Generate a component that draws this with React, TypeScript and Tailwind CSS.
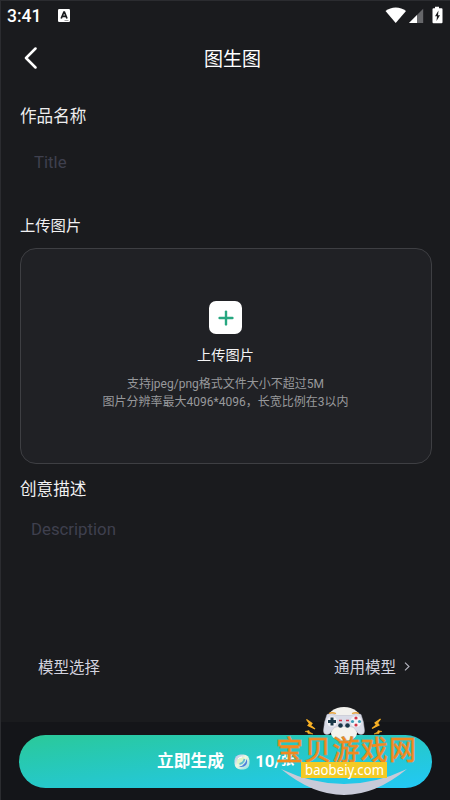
import { useState } from "react";
import { Plus } from "lucide-react";

const UPLOAD_HINTS = [
  "支持jpeg/png格式文件大小不超过5M",
  "图片分辨率最大4096*4096，长宽比例在3以内",
];

function StatusBar() {
  return (
    <div className="flex h-[31px] items-center justify-between pl-[6px] pr-[7px]">
      <div className="flex items-center gap-[17px]">
        <span className="-mt-px text-[17.5px] font-medium leading-[30px]">3:41</span>
        <svg className="-mt-0.5 h-[13px] w-3" viewBox="0 0 12 13">
          <rect width="12" height="13" rx="1.2" fill="#fff" />
          <path d="M3.2 9.5 5.9 3h.5l2.6 6.5M4.4 7.3h3.5" fill="none" stroke="#1a1b1e" strokeWidth="1.7" />
          <path d="M6.5 11.5h4" stroke="#8a8b8e" strokeWidth="0.8" />
        </svg>
      </div>
      <svg className="-mt-1 h-[18px] w-[58px]" viewBox="0 0 58 18">
        <path d="M.5 5C6 .2 15.500.2 21 5L10.700 17Z" fill="#fff" />
        <path d="M24 17 38.200 2.800V17Z" fill="#66676a" />
        <path d="M24 17 32 9V17Z" fill="#fff" />
        <path d="M50 .8h4v1.500h2.500q1 0 1 1v13q0 1-1 1h-8q-1 0-1-1v-13q0-1 1-1H50Z" fill="#fff" />
        <path d="M53.500 4.500 50 10.300h2L51.500 15 55 9.300h-2Z" fill="#1a1b1e" />
      </svg>
    </div>
  );
}

function Header() {
  return (
    <div className="grid h-[54px] grid-cols-[60px_1fr_46px] items-center">
      <button className="-mt-0.5 pl-[22px]">
        <svg className="h-[22px] w-[14px]" viewBox="0 0 14 22">
          <path d="M12.500 1.500 3 11 12.500 20.500" fill="none" stroke="#fff" strokeWidth="2.500" strokeLinecap="round" strokeLinejoin="round" />
        </svg>
      </button>
      <h1 className="pt-0.5 text-center text-[19px] leading-[28px]">图生图</h1>
    </div>
  );
}

function UploadCard() {
  return (
    <button className="flex h-[216px] w-[412px] flex-col items-center rounded-[16px] border border-[#3e3f43] bg-[#202125] pr-px pt-[52px]">
      <span className="flex h-[33px] w-[33px] items-center justify-center rounded-[7px] bg-white text-[#27a780]">
        <Plus className="h-[22px] w-[22px]" strokeWidth={2.6} />
      </span>
      <span className="mt-[11px] text-[14.2px] leading-[20px] text-[#f4f4f5]">上传图片</span>
      <span className="mt-[11px] flex flex-col items-center text-[12px] leading-[17.500px] text-[#98999c]">
        {UPLOAD_HINTS.map((hint) => (
          <span key={hint}>{hint}</span>
        ))}
      </span>
    </button>
  );
}

function Coin() {
  return (
    <svg className="h-4 w-4" viewBox="0 0 16 16">
      <defs>
        <linearGradient id="coin" x1="0" y1="0" x2="1" y2="1">
          <stop offset="0" stopColor="#a9b8ee" />
          <stop offset="0.45" stopColor="#eef9e2" />
          <stop offset="1" stopColor="#8fdce6" />
        </linearGradient>
      </defs>
      <rect x="0.500" y="0.500" width="15" height="15" rx="6" fill="url(#coin)" />
      <path d="M12.500 5Q14 8 12 11q-3 3-7 1.500 4-.5 5.500-3Q12 8 12.500 5Z" fill="#4f7fdc" />
      <path d="M3 7.500q0-4 5-4.500 3 0 3 2.500-2 4-6 5Q3 10 3 7.500Z" fill="#dff5c8" />
      <path d="M5.500 10q4-.5 5-5" fill="none" stroke="#63bfd0" strokeWidth="1.800" />
      <path d="M4 5q1.500-2 4-2" fill="none" stroke="#fff" strokeWidth="1" />
    </svg>
  );
}

// Site stamp that floats over the generate button
function SiteStamp() {
  return (
    <div className="pointer-events-none absolute left-[269px] top-[699px] h-[100px] w-[155px]">
      <svg className="h-full w-full" viewBox="0 0 155 100">
        <path d="M11 69Q74 99 137 69Q74 121 11 69Z" fill="#c8cad8" />
        <ellipse cx="74" cy="21" rx="17.500" ry="14" fill="#f2f1ed" />
        <ellipse cx="74" cy="33" rx="13" ry="8" fill="#f5f4ef" />
        <path d="M57 14.500q5-2.500 10 1h14q5-3.500 10-1 3 7 3.500 16 .2 4-3.500 4-3 0-5-4-2-4-6-4H68q-4 0-6 4-2 4-5 4-3.700 0-3.500-4Q54 21.500 57 14.500Z" fill="#d9dbe7" stroke="#b8bbc9" strokeWidth="0.500" />
        <path d="M59 13.500q3-1.500 7 0M82 13.500q4-1.500 7 0" fill="none" stroke="#e8a33a" strokeWidth="1.300" />
        <circle cx="62" cy="21.500" r="5.200" fill="#f0f0f5" />
        <path d="M62 17.500v8M58 21.500h8" stroke="#193747" strokeWidth="3" />
        <circle cx="86" cy="21.500" r="5.500" fill="#f3f3f7" />
        <circle cx="86" cy="18" r="1.600" fill="#d43246" />
        <circle cx="89.500" cy="21.500" r="1.600" fill="#3d9eb8" />
        <circle cx="86" cy="25" r="1.600" fill="#d43246" />
        <circle cx="82.500" cy="21.500" r="1.600" fill="#3d9eb8" />
        <path d="M69 20.500h3M76 20.500h3" stroke="#d43246" strokeWidth="1.300" />
        <circle cx="70.500" cy="25.500" r="2.300" fill="#193747" />
        <circle cx="77.500" cy="25.500" r="2.300" fill="#193747" />
        <path d="M36.500 19.500 42 23.500 40.500 25.500 45 29 38 25.500 39.500 23.500ZM110.500 19 105 23 106.500 25 102 28.500 109 25 107.500 23Z" fill="#f6af25" stroke="#f6af25" strokeWidth="1.200" />
        <path d="m35 31.500 4-1 .5 1.500 3.500 2-5-.5-.5-1.500ZM112 31.500l-4-1-.5 1.500-3.500 2 5-.5.500-1.500Z" fill="#f6af25" stroke="#f6af25" strokeWidth="0.500" />
        <text
          x="6"
          y="59.500"
          textLength="140"
          fontSize="27"
          fontFamily="Noto Sans CJK SC, sans-serif"
          fill="#f28a1e"
          stroke="#b89a62"
          strokeWidth="1.100"
          paintOrder="stroke"
        >
          宝贝游戏网
        </text>
        <rect x="31" y="62" width="86" height="16" fill="#f4ca25" />
        <text
          x="35"
          y="74.500"
          textLength="79"
          lengthAdjust="spacingAndGlyphs"
          fontSize="15"
          fontFamily="Noto Sans, sans-serif"
          fill="#fff"
        >
          baobeiy.com
        </text>
      </svg>
    </div>
  );
}

export default function App() {
  const [title, setTitle] = useState("");
  const [description, setDescription] = useState("");

  return (
    <div className="relative flex h-[800px] w-[450px] flex-col overflow-hidden border-l border-t border-[#2b2c30] bg-[#1a1b1e] font-[Roboto,'Noto_Sans_CJK_SC',sans-serif] text-white">
      <StatusBar />
      <Header />

      <main className="flex flex-1 flex-col pl-[19px]">
        <label className="mt-[19px] text-[16.600px] leading-[24px] text-[#ededee]">作品名称</label>
        <input
          value={title}
          onChange={(e) => setTitle(e.target.value)}
          placeholder="Title"
          className="ml-[14px] mt-[19px] h-[28px] w-[380px] bg-transparent text-[16.800px] outline-none placeholder:text-[#3f404e]"
        />

        <label className="mb-[10px] mt-[38px] text-[15.300px] leading-[24px] text-[#f1f1f2]">上传图片</label>
        <UploadCard />

        <label className="mt-[14px] text-[16.600px] leading-[24px] text-[#f1f1f2]">创意描述</label>
        <textarea
          value={description}
          onChange={(e) => setDescription(e.target.value)}
          placeholder="Description"
          className="ml-[11px] mt-[14px] h-[110px] w-[380px] resize-none bg-transparent text-[16.800px] leading-[26px] outline-none placeholder:text-[#3f404e]"
        />

        <div className="mt-[30px] flex h-6 w-[412px] items-center justify-between pl-[18px] pr-[21px] text-[15.500px] leading-[24px] text-[#d3d3df]">
          <span>模型选择</span>
          <span className="flex items-center gap-[8px]">
            通用模型
            <svg className="-mt-1 mr-px h-[9px] w-[6px]" viewBox="0 0 6 9">
              <path d="M1 .7 5 4.500 1 8.300" fill="none" stroke="#b5b5c0" strokeWidth="1.100" />
            </svg>
          </span>
        </div>
      </main>

      <footer className="h-[78px] shrink-0 bg-[#141519] pl-[18px] pt-[13px]">
        <button className="flex h-[53px] w-[413px] items-center rounded-full bg-linear-to-br from-[#2bc998] via-[#26c8c8] to-[#23c8f6] pl-[138px] text-[16.800px] font-bold">
          <span>立即生成</span>
          <span className="ml-[10px]">
            <Coin />
          </span>
          <span className="ml-[5px] flex items-center whitespace-nowrap">
            10/<span className="-mt-1 text-[13.500px]">张</span>
          </span>
        </button>
      </footer>

      <SiteStamp />
    </div>
  );
}
